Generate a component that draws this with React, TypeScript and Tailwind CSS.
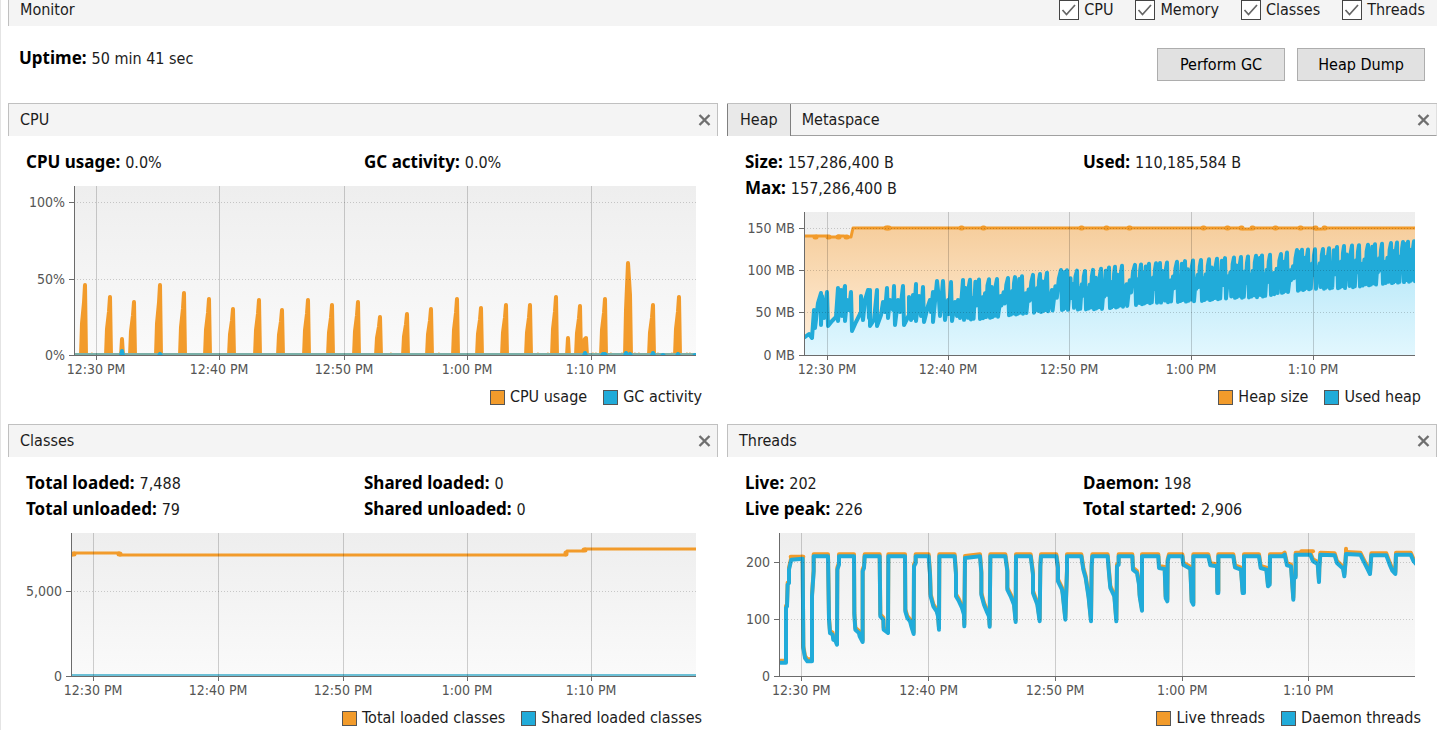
import React, { useState } from 'react';

const ORANGE = '#f29b2b';
const BLUE = '#21abd9';

interface Tick {
  at: number;
  label: string;
}

interface ChartProps {
  id: string;
  // x, y, width and height of the plot in data units
  box: [number, number, number, number];
  xTicks: Tick[];
  yTicks: Tick[];
  className: string;
  children: React.ReactNode;
}

const percent = (value: number, start: number, size: number) =>
  `${((value - start) / size) * 100}%`;

const Chart: React.FC<ChartProps> = ({ id, box, xTicks, yTicks, className, children }) => {
  const [x, y, width, height] = box;

  return (
    <div className={className}>
      <svg width="100%" height="100%" className="block overflow-visible" role="img" aria-label={id}>
        <defs>
          <linearGradient id={`${id}-back`} x1="0" y1="0" x2="0" y2="1">
            <stop offset="0" stopColor="#eeeeee" />
            <stop offset="1" stopColor="#fafafa" />
          </linearGradient>
        </defs>
        <rect width="100%" height="100%" fill={`url(#${id}-back)`} />

        {/* Series */}
        <svg
          width="100%"
          height="100%"
          viewBox={box.join(' ')}
          preserveAspectRatio="none"
          strokeLinejoin="round"
          strokeLinecap="round"
        >
          {children}
        </svg>

        {/* Grid and tick labels */}
        <g shapeRendering="crispEdges">
          {xTicks.map((tick) => {
            const left = percent(tick.at, x, width);
            return (
              <g key={tick.label}>
                <line x1={left} x2={left} y1="0" y2="100%" stroke="#000" strokeOpacity="0.18" />
                <svg x={left} y="100%" className="overflow-visible">
                  <line y1="0" y2="5" stroke="#6b6b6b" />
                  <text y="19" textAnchor="middle" fill="#555" className="text-[14px]">
                    {tick.label}
                  </text>
                </svg>
              </g>
            );
          })}
          {yTicks.map((tick) => {
            const top = percent(tick.at, y, height);
            return (
              <g key={tick.label}>
                <line
                  x1="0"
                  x2="100%"
                  y1={top}
                  y2={top}
                  stroke="#000"
                  strokeOpacity="0.18"
                  strokeDasharray="1 2"
                />
                <svg y={top} className="overflow-visible">
                  <line x1="-5" x2="0" stroke="#6b6b6b" />
                  <text x="-9" y="5" textAnchor="end" fill="#555" className="text-[14px]">
                    {tick.label}
                  </text>
                </svg>
              </g>
            );
          })}
          <line x1="0" x2="0" y1="0" y2="100%" stroke="#6b6b6b" />
          <line x1="0" x2="100%" y1="100%" y2="100%" stroke="#6b6b6b" />
        </g>
      </svg>
    </div>
  );
};

const times = (...at: number[]): Tick[] =>
  ['12:30 PM', '12:40 PM', '12:50 PM', '1:00 PM', '1:10 PM'].map((label, i) => ({
    at: at[i],
    label,
  }));

// [x, top] of every load spike
const cpuSpikes = [
  [85, 285], [110, 297], [134, 302], [160, 285], [184, 293], [209, 299], [233, 309],
  [259, 300], [282, 310], [308, 300], [332, 305], [358, 302], [380, 317], [407, 314],
  [431, 309], [457, 299], [481, 308], [506, 305], [530, 305], [556, 297], [580, 306],
  [605, 299], [653, 305], [679, 297],
];

const cpuBumps = [92, 391, 439, 538, 548, 593, 596, 611, 622, 635, 639, 648, 658, 672, 687, 690];

const gcBumps = [
  [160, 353], [585, 352], [603, 353], [605, 353], [626, 352], [630, 353], [653, 352],
  [663, 354], [678, 353], [695, 354],
];

const spikePath = ([x, top]: number[]) => {
  const rise = 355 - top;
  return `M${x - 4} 356L${x - 3} ${top + rise * 0.55}L${x - 1} ${top + rise * 0.25}L${x} ${top}L${x + 1} 356Z`;
};

const CpuChart = () => (
  <Chart
    id="cpu"
    className="mr-1.5 ml-12 mt-[11px] h-[169px]"
    box={[74, 186, 622, 169]}
    xTicks={times(96, 219, 344, 467, 591)}
    yTicks={[
      { at: 202, label: '100%' },
      { at: 279, label: '50%' },
      { at: 355, label: '0%' },
    ]}
  >
    <g fill={ORANGE} stroke={ORANGE} strokeWidth="4">
      {cpuSpikes.map((spike) => (
        <path key={spike[0]} d={spikePath(spike)} vectorEffect="non-scaling-stroke" />
      ))}
      <path d="M121 356L122 339L123 356Z" vectorEffect="non-scaling-stroke" />
      <path d="M567 356L568 338L569 356Z" vectorEffect="non-scaling-stroke" />
      <path d="M583 356L584 340L586 338L587 356Z" vectorEffect="non-scaling-stroke" />
      <path d="M625 356L626 310L628 263L630 295L631 356Z" vectorEffect="non-scaling-stroke" />
      {cpuBumps.map((x) => (
        <path key={x} d={`M${x - 1} 356L${x} 354L${x + 1} 356Z`} strokeWidth="3" vectorEffect="non-scaling-stroke" />
      ))}
    </g>
    <g fill={BLUE} stroke={BLUE} strokeWidth="4">
      <path d="M74 354H696" stroke="#7bb0a8" strokeWidth="2" />
      <path d="M121 356L122 351L123 356Z" />
      {gcBumps.map(([x, top]) => (
        <path key={x} d={`M${x - 1} 356L${x} ${top + 1}L${x + 1} 356Z`} />
      ))}
    </g>
  </Chart>
);

const heapSizeLine =
  '805,236 814,236 815,237 816,236 827,236 828,237 836,237 838,236 844,236 846,237 851,237 853,228 1241,228 1243,229 1251,229 1252,228 1314,228 1316,229 1322,229 1324,228 1416,228';

const heapDots = [815, 828, 838, 846, 886, 888, 961, 983, 1081, 1106, 1129, 1203, 1227, 1241, 1252, 1275, 1300, 1315, 1324];

const heapStart =
  '805,337 809,334 812,338 814,310 815,328 818,303 821,293 821,325 822,296 824,318 827,292 828,326 832,321 836,317 838,288 838,321 841,290 842,316 843,296 845,286 845,321 847,300 849,310 851,292 852,331 856,322 861,312 861,296 863,320 865,300 868,290 869,318 870,290 870,326 874,320 877,290 877,326 881,315 883,302 885,312 887,288 888,318 890,300 893,310 894,286 895,325 898,300 900,312 903,286 904,325 909,315 909,297 911,320 913,295 914,318 916,284 916,321 919,296 921,316 923,287 924,322 928,306 930,300 931,312 933,292 933,322 937,281 939,300 940,316 943,281 945,320 948,300 949,314 951,282 952,321 955,302 957,316 958,300 960,318';

const heapPeaks = [
  963, 970, 979, 989, 997, 1008, 1015, 1022, 1033, 1040, 1047, 1061, 1067, 1077, 1085, 1093,
  1101, 1109, 1115, 1122, 1135, 1141, 1149, 1156, 1160, 1167, 1177, 1185, 1193, 1201, 1209,
  1217, 1225, 1234, 1241, 1248, 1256, 1262, 1270, 1281, 1287, 1297, 1302, 1308, 1315, 1323,
  1329, 1337, 1344, 1352, 1359, 1368, 1375, 1382, 1391, 1397, 1403, 1408, 1414,
];

const heapTop = [[960, 280], [1000, 279], [1040, 274], [1061, 270], [1085, 271], [1120, 266], [1160, 263], [1200, 260], [1240, 257], [1281, 254], [1297, 250], [1323, 249], [1344, 246], [1380, 244], [1416, 241]];
const heapBottom = [[960, 320], [980, 319], [1010, 315], [1060, 310], [1100, 309], [1120, 307], [1150, 303], [1200, 301], [1230, 298], [1260, 297], [1280, 293], [1310, 289], [1345, 288], [1380, 284], [1416, 281]];

const levelAt = (curve: number[][], x: number) => {
  const i = Math.max(1, curve.findIndex((point) => point[0] >= x));
  const [x0, y0] = curve[i - 1];
  const [x1, y1] = curve[i];
  return y0 + ((x - x0) / (x1 - x0)) * (y1 - y0);
};

const usedHeapLine = [
  heapStart,
  ...heapPeaks.map((x, i) => {
    const top = levelAt(heapTop, x);
    const bottom = levelAt(heapBottom, x);
    const rise = bottom - top;
    const gap = (heapPeaks[i + 1] ?? 1416) - x;
    const points = [[x, top], [x + 1, bottom]];
    if (gap > 3) {
      points.push(
        [x + gap * 0.35, top + rise * (i % 3 === 0 ? 0.2 : 0.45)],
        [x + gap * 0.4, bottom - rise * (i % 4 === 0 ? 0.3 : 0.02)],
        [x + gap * 0.6, top + rise * (i % 5 === 1 ? 0.05 : 0.35)],
        [x + gap * 0.7, bottom - rise * (i % 3 === 1 ? 0.35 : 0.05)],
        [x + gap * 0.85, top + rise * 0.15],
      );
    }
    return points.map((point) => point.join(',')).join(' ');
  }),
].join(' ');

const HeapChart = () => (
  <Chart
    id="heap"
    className="mr-1.5 ml-[59px] mt-[11px] h-[143px]"
    box={[804, 212, 611, 143]}
    xTicks={times(827, 948, 1069, 1191, 1313)}
    yTicks={[
      { at: 228, label: '150 MB' },
      { at: 270, label: '100 MB' },
      { at: 312, label: '50 MB' },
      { at: 355, label: '0 MB' },
    ]}
  >
    <defs>
      <linearGradient id="heap-size" x1="0" y1="228" x2="0" y2="355" gradientUnits="userSpaceOnUse">
        <stop offset="0" stopColor="#f6ce9d" />
        <stop offset="1" stopColor="#fff0de" />
      </linearGradient>
      <linearGradient id="heap-used" x1="0" y1="228" x2="0" y2="355" gradientUnits="userSpaceOnUse">
        <stop offset="0" stopColor="#a9e3f7" />
        <stop offset="1" stopColor="#e2f7fe" />
      </linearGradient>
    </defs>
    <polygon points={`804,236 ${heapSizeLine} 1416,355 804,355`} fill="url(#heap-size)" />
    <polyline points={heapSizeLine} fill="none" stroke={ORANGE} strokeWidth="3" vectorEffect="non-scaling-stroke" />
    {heapDots.map((x) => (
      <path
        key={x}
        d={x < 850 ? `M${x} 237h1` : `M${x} 228h1`}
        stroke={ORANGE}
        strokeWidth="5"
        vectorEffect="non-scaling-stroke"
      />
    ))}
    <polygon points={`${usedHeapLine} 1416,281 1416,355 804,355`} fill="url(#heap-used)" />
    <polyline points={usedHeapLine} fill="none" stroke={BLUE} strokeWidth="4" vectorEffect="non-scaling-stroke" />
  </Chart>
);

const ClassesChart = () => (
  <Chart
    id="classes"
    className="mr-1.5 ml-[45px] mt-[11px] h-[143px]"
    box={[71, 533, 625, 143]}
    xTicks={times(93, 218, 343, 467, 591)}
    yTicks={[
      { at: 591, label: '5,000' },
      { at: 676, label: '0' },
    ]}
  >
    <path
      d="M72 555L74 553H119L120 555H566L567 551H583L585 549H698"
      fill="none"
      stroke={ORANGE}
      strokeWidth="3"
      vectorEffect="non-scaling-stroke"
    />
    <path
      d="M73 554h1M119 554h1M566 553v1M584 550h1"
      stroke={ORANGE}
      strokeWidth="5"
      vectorEffect="non-scaling-stroke"
    />
    <path d="M71 675H698" stroke="#6cc0d6" strokeWidth="2" vectorEffect="non-scaling-stroke" />
  </Chart>
);

const daemonLine =
  '160,744 184,744 184,580 187,575 189,510 193,505 193,465 200,435 234,432 236,700 241,730 248,740 262,740 262,545 267,470 267,425 310,425 313,615 316,655 324,660 326,675 332,678 337,690 338,465 343,450 343,425 388,425 389,600 392,645 403,655 405,665 414,682 414,470 418,460 420,425 465,425 467,605 476,615 477,645 490,655 491,425 541,425 542,590 548,610 556,620 560,635 567,658 568,455 573,445 573,425 612,425 616,480 618,545 626,575 636,590 640,605 643,645 644,425 690,425 694,480 694,545 703,560 712,580 718,600 719,635 721,430 766,425 770,475 770,540 778,570 786,590 793,605 795,636 797,425 842,425 848,470 848,525 858,545 868,570 873,622 874,425 918,425 925,480 925,535 938,570 945,620 947,455 949,425 995,425 1000,460 1000,500 1012,525 1014,538 1022,615 1027,470 1027,425 1070,425 1076,465 1083,490 1092,550 1099,620 1101,455 1103,425 1149,425 1153,475 1157,520 1169,545 1175,620 1177,455 1182,450 1182,425 1223,425 1225,465 1237,475 1243,510 1245,545 1252,588 1252,425 1301,425 1303,460 1320,463 1323,550 1328,560 1329,440 1333,425 1373,425 1376,450 1397,462 1401,560 1406,570 1406,425 1451,425 1457,452 1477,455 1478,535 1481,535 1481,425 1526,425 1531,458 1549,465 1554,535 1558,535 1558,425 1603,425 1608,460 1625,465 1630,515 1635,510 1636,425 1673,425 1680,420 1687,452 1699,455 1706,555 1708,490 1713,488 1713,420 1757,420 1765,440 1779,448 1783,502 1784,460 1787,420 1830,422 1837,445 1855,462 1859,485 1862,450 1864,418 1907,420 1917,440 1928,462 1936,478 1940,422 1985,422 1995,450 2003,468 2012,478 2014,420 2058,420 2066,438 2074,448';

const ThreadsChart = () => (
  <Chart
    id="threads"
    className="mr-1.5 ml-[34px] mt-[11px] h-[143px]"
    box={[163, 355, 1908, 429]}
    xTicks={times(230, 612, 991, 1373, 1751)}
    yTicks={[
      { at: 442, label: '200' },
      { at: 613, label: '100' },
      { at: 784, label: '0' },
    ]}
  >
    <g fill="none" stroke={ORANGE} strokeWidth="4">
      <polyline points={daemonLine} transform="translate(0 -6)" vectorEffect="non-scaling-stroke" />
      <polyline points="1730,410 1765,410" vectorEffect="non-scaling-stroke" />
      <polyline points="1864,402 1864,416" vectorEffect="non-scaling-stroke" />
      <polyline points="198,426 236,426" vectorEffect="non-scaling-stroke" />
    </g>
    <polyline points={daemonLine} fill="none" stroke={BLUE} strokeWidth="4" vectorEffect="non-scaling-stroke" />
  </Chart>
);

const CloseButton: React.FC<{ label: string }> = ({ label }) => (
  <button type="button" aria-label={`Close ${label}`} className="ml-auto pr-[6px]">
    <svg width="13" height="12" viewBox="0 0 13 12" fill="none" stroke="#6f6f6f">
      <path d="M1.5 1L11.5 11M11.5 1L1.5 11" strokeWidth="2.4" />
    </svg>
  </button>
);

const PanelTitle: React.FC<{ title: string }> = ({ title }) => (
  <header className="flex h-[33px] items-center border-x border-t border-[#c0c0c0] bg-[#f4f4f4] pl-[11px]">
    <h2>{title}</h2>
    <CloseButton label={title} />
  </header>
);

const MemoryTabs = () => {
  const [active, setActive] = useState('Heap');

  return (
    <header className="flex h-[33px] items-stretch border-t border-[#c0c0c0] bg-[#f4f4f4]" role="tablist">
      {['Heap', 'Metaspace'].map((tab) => (
        <button
          key={tab}
          type="button"
          role="tab"
          aria-selected={active === tab}
          onClick={() => setActive(tab)}
          className={
            active === tab
              ? 'border-x border-[#808080] bg-[#e9e9e9] px-3'
              : 'border-b border-[#a0a0a0] px-[11px]'
          }
        >
          {tab}
        </button>
      ))}
      <div className="flex flex-1 items-center border-b border-r border-b-[#a0a0a0] border-r-[#e0e0e0]">
        <CloseButton label="Memory" />
      </div>
    </header>
  );
};

interface PanelProps {
  header: React.ReactNode;
  stats: [string, string][];
  legend: [string, string];
  children: React.ReactNode;
}

const Panel: React.FC<PanelProps> = ({ header, stats, legend, children }) => (
  <section className="min-w-0">
    {header}
    <div className="pl-[18px] pr-4 pt-[13px]">
      <dl className="grid grid-cols-2">
        {stats.map(([name, value]) => (
          <div key={name} className="flex h-[26px] items-baseline gap-[5px] leading-[26px]">
            <dt className="font-['Noto_Sans'] text-[17px] font-bold text-black">{name}:</dt>
            <dd>{value}</dd>
          </div>
        ))}
      </dl>
      {children}
      <ul className="mt-[30px] flex h-6 items-center justify-end gap-4">
        <li className="flex items-center gap-[5px]">
          <span className="size-[15px] border border-[#555] bg-[#f29b2b]" />
          {legend[0]}
        </li>
        <li className="flex items-center gap-[5px]">
          <span className="size-[15px] border border-[#555] bg-[#21abd9]" />
          {legend[1]}
        </li>
      </ul>
    </div>
  </section>
);

const Toggle: React.FC<{ label: string }> = ({ label }) => {
  const [checked, setChecked] = useState(true);

  return (
    <label className="flex items-center gap-[5px]">
      <span className="grid size-5">
        <input
          type="checkbox"
          checked={checked}
          onChange={(e) => setChecked(e.target.checked)}
          className="col-start-1 row-start-1 size-5 appearance-none border border-[#444] bg-white"
        />
        {checked && (
          <svg
            viewBox="0 0 20 20"
            fill="none"
            stroke="#666"
            strokeWidth="1.7"
            className="pointer-events-none col-start-1 row-start-1 size-5"
          >
            <path d="M3.5 10L7.5 14.5L16 5" />
          </svg>
        )}
      </span>
      {label}
    </label>
  );
};

export default function App() {
  return (
    <main className="min-h-screen border-l border-[#e4e4e4] bg-white pl-[7px] font-['DejaVu_Sans_Condensed','DejaVu_Sans',sans-serif] text-[16px] leading-5 text-[#1c1c1c]">
      <header className="flex h-[26px] items-center justify-between border-l border-[#c0c0c0] bg-[#f4f4f4] pb-1.5 pl-[11px] pr-3">
        <h1>Monitor</h1>
        <div className="flex gap-[22px]">
          <Toggle label="CPU" />
          <Toggle label="Memory" />
          <Toggle label="Classes" />
          <Toggle label="Threads" />
        </div>
      </header>

      <div className="flex items-start justify-between py-[22px] pl-[11px] pr-3">
        <p className="flex items-baseline gap-[5px]">
          <b className="font-['Noto_Sans'] text-[17px] text-black">Uptime:</b>
          <span>50 min 41 sec</span>
        </p>
        <div className="flex gap-3">
          <button type="button" className="h-[33px] w-32 border border-[#adadad] bg-[#e1e1e1] text-black">
            Perform GC
          </button>
          <button type="button" className="h-[33px] w-32 border border-[#adadad] bg-[#e1e1e1] text-black">
            Heap Dump
          </button>
        </div>
      </div>

      <div className="grid grid-cols-2 gap-x-[9px] gap-y-[15px]">
        <Panel
          header={<PanelTitle title="CPU" />}
          stats={[
            ['CPU usage', '0.0%'],
            ['GC activity', '0.0%'],
          ]}
          legend={['CPU usage', 'GC activity']}
        >
          <CpuChart />
        </Panel>
        <Panel
          header={<MemoryTabs />}
          stats={[
            ['Size', '157,286,400 B'],
            ['Used', '110,185,584 B'],
            ['Max', '157,286,400 B'],
          ]}
          legend={['Heap size', 'Used heap']}
        >
          <HeapChart />
        </Panel>
        <Panel
          header={<PanelTitle title="Classes" />}
          stats={[
            ['Total loaded', '7,488'],
            ['Shared loaded', '0'],
            ['Total unloaded', '79'],
            ['Shared unloaded', '0'],
          ]}
          legend={['Total loaded classes', 'Shared loaded classes']}
        >
          <ClassesChart />
        </Panel>
        <Panel
          header={<PanelTitle title="Threads" />}
          stats={[
            ['Live', '202'],
            ['Daemon', '198'],
            ['Live peak', '226'],
            ['Total started', '2,906'],
          ]}
          legend={['Live threads', 'Daemon threads']}
        >
          <ThreadsChart />
        </Panel>
      </div>
    </main>
  );
}
